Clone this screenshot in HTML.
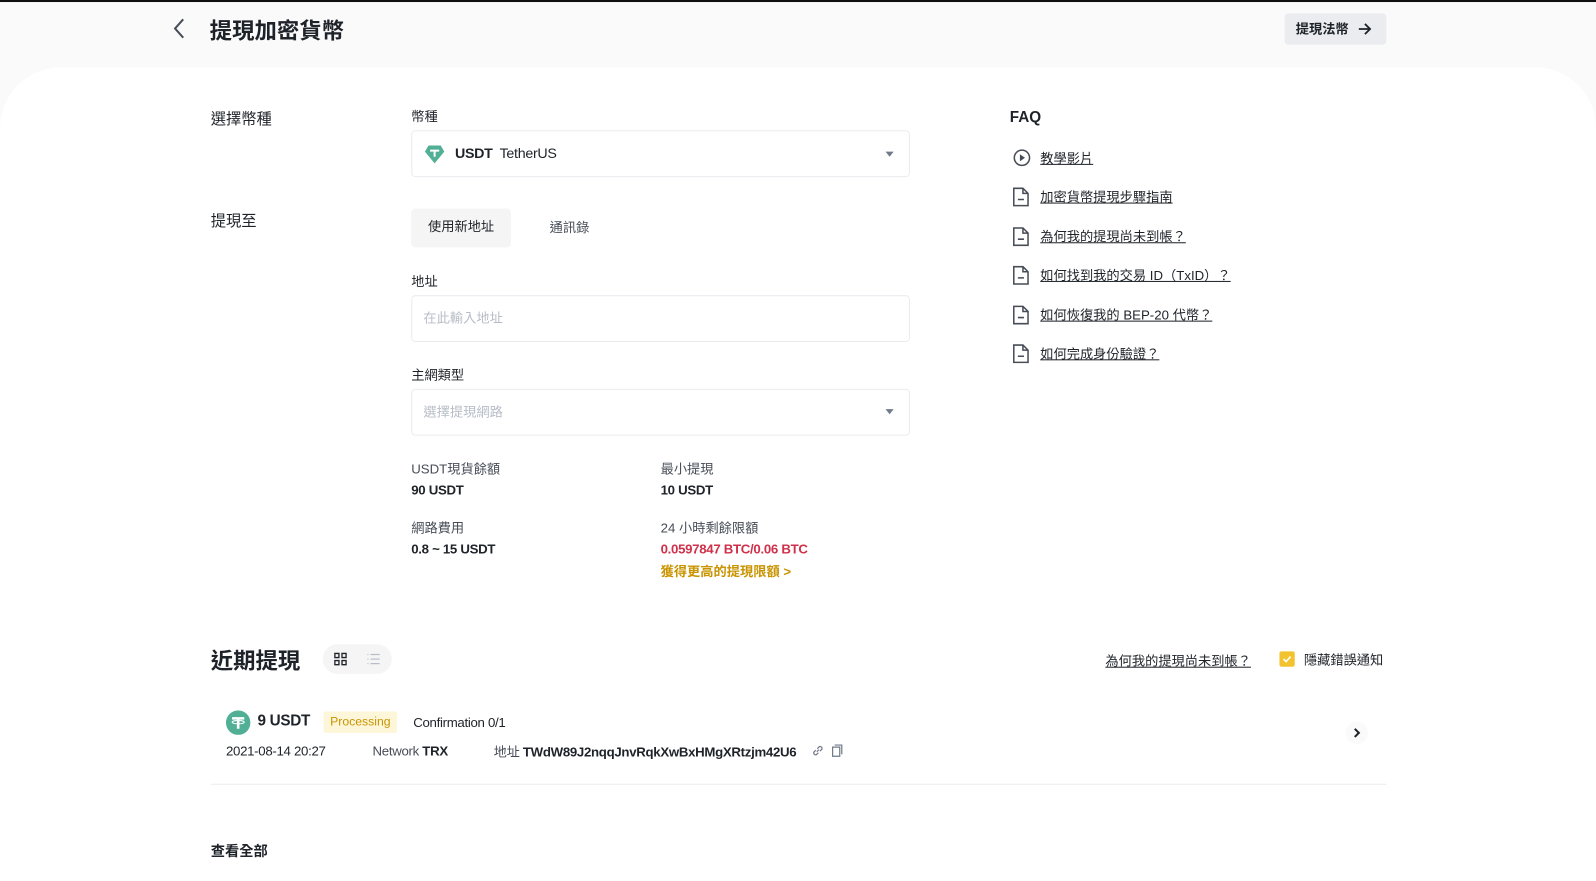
<!DOCTYPE html>
<html><head><meta charset="utf-8"><style>
*{box-sizing:border-box;margin:0;padding:0}
body{width:1596px;height:858px;overflow:hidden;background:#fafafa;font-family:"Liberation Sans","Noto Sans CJK TC",sans-serif;color:#1e2329;position:relative}
#w{position:absolute;left:0;top:0;width:1568px;height:843px;transform:scale(1.01786);transform-origin:0 0}
.abs{position:absolute}
.topline{left:0;top:0;width:1568px;height:2px;background:#111}
.card{left:0;top:66px;width:1568px;height:800px;background:#fff;border-radius:60px 60px 0 0}
.lbl{font-size:15px;color:#1e2329}
.small{font-size:13px;color:#474d57}
.inp{border:1px solid #eaecef;border-radius:4px;background:#fff;width:490px;height:46px}
.ph{font-size:13px;color:#b7bdc6}
.caret{width:0;height:0;border-left:4px solid transparent;border-right:4px solid transparent;border-top:5px solid #707a8a}
.faq a{position:absolute;left:1022px;font-size:13px;color:#1e2329;text-decoration:underline;white-space:nowrap}
.doc{position:absolute;left:995px}
.b{font-weight:bold}
.n{letter-spacing:-0.3px}
</style></head><body><div id="w">
<div class="abs topline"></div>
<svg class="abs" style="left:168px;top:17px" width="16" height="22" viewBox="0 0 16 22"><path d="M12 2 L4 11 L12 20" fill="none" stroke="#474d57" stroke-width="2"/></svg>
<div class="abs b" style="left:206px;top:13px;font-size:22px">提現加密貨幣</div>
<div class="abs b" style="left:1262px;top:13px;width:100px;height:31px;background:#eaecef;border-radius:4px;font-size:13px;line-height:31px;padding-left:11px">提現法幣 <svg style="position:absolute;left:72px;top:9px" width="14" height="13" viewBox="0 0 14 13"><path d="M1 6.5H12M7 1.5L12 6.5L7 11.5" fill="none" stroke="#1e2329" stroke-width="1.8"/></svg></div>
<div class="abs card"></div>

<div class="abs lbl" style="left:207px;top:106px">選擇幣種</div>
<div class="abs small" style="left:404px;top:104px;color:#1e2329">幣種</div>
<div class="abs inp" style="left:404px;top:128px"></div>
<svg class="abs" style="left:417px;top:142px" width="20" height="19" viewBox="0 0 20 19"><path d="M4 1H16L19.5 7L10 18.5L0.5 7Z" fill="#50af95"/><path d="M5.5 5H14.5V7H11V12H9V7H5.5Z" fill="#fff"/></svg>
<div class="abs n" style="left:447px;top:142px;font-size:14px"><b>USDT</b>&nbsp; TetherUS</div>
<div class="abs caret" style="left:870px;top:149px"></div>

<div class="abs lbl" style="left:207px;top:206px">提現至</div>
<div class="abs" style="left:404px;top:205px;width:98px;height:38px;background:#f5f5f5;border-radius:4px;font-size:13px;line-height:36px;text-align:center">使用新地址</div>
<div class="abs" style="left:540px;top:213px;font-size:13px;color:#474d57">通訊錄</div>

<div class="abs small" style="left:404px;top:266px;color:#1e2329">地址</div>
<div class="abs inp" style="left:404px;top:290px"></div>
<div class="abs ph" style="left:416px;top:302px">在此輸入地址</div>
<div class="abs small" style="left:404px;top:358px;color:#1e2329">主網類型</div>
<div class="abs inp" style="left:404px;top:382px"></div>
<div class="abs ph" style="left:416px;top:394px">選擇提現網路</div>
<div class="abs caret" style="left:870px;top:402px"></div>

<div class="abs small" style="left:404px;top:450px">USDT現貨餘額</div>
<div class="abs b n" style="left:404px;top:474px;font-size:13px">90 USDT</div>
<div class="abs small" style="left:404px;top:508px">網路費用</div>
<div class="abs b n" style="left:404px;top:532px;font-size:13px">0.8 ~ 15 USDT</div>
<div class="abs small" style="left:649px;top:450px">最小提現</div>
<div class="abs b n" style="left:649px;top:474px;font-size:13px">10 USDT</div>
<div class="abs small" style="left:649px;top:508px">24 小時剩餘限額</div>
<div class="abs b n" style="left:649px;top:532px;font-size:13px;color:#cf304a">0.0597847 BTC/0.06 BTC</div>
<div class="abs b" style="left:649px;top:551px;font-size:13px;color:#c99400">獲得更高的提現限額 &gt;</div>

<div class="abs b" style="left:992px;top:107px;font-size:15px">FAQ</div>
<div class="faq">
<svg class="doc" style="top:146px" width="18" height="18" viewBox="0 0 18 18"><circle cx="9" cy="9" r="7.5" fill="none" stroke="#474d57" stroke-width="1.5"/><path d="M7 5.5L12 9L7 12.5Z" fill="#474d57"/></svg>
<a style="top:145px">教學影片</a>
<svg class="doc" style="top:184px" width="16" height="19" viewBox="0 0 16 19"><path d="M1 1H10L15 6V18H1Z M10 1V6H15 M5 12H11" fill="none" stroke="#474d57" stroke-width="1.5"/></svg>
<a style="top:183px">加密貨幣提現步驟指南</a>
<svg class="doc" style="top:223px" width="16" height="19" viewBox="0 0 16 19"><path d="M1 1H10L15 6V18H1Z M10 1V6H15 M5 12H11" fill="none" stroke="#474d57" stroke-width="1.5"/></svg>
<a style="top:222px">為何我的提現尚未到帳？</a>
<svg class="doc" style="top:261px" width="16" height="19" viewBox="0 0 16 19"><path d="M1 1H10L15 6V18H1Z M10 1V6H15 M5 12H11" fill="none" stroke="#474d57" stroke-width="1.5"/></svg>
<a style="top:260px">如何找到我的交易 ID（TxID）？</a>
<svg class="doc" style="top:300px" width="16" height="19" viewBox="0 0 16 19"><path d="M1 1H10L15 6V18H1Z M10 1V6H15 M5 12H11" fill="none" stroke="#474d57" stroke-width="1.5"/></svg>
<a style="top:299px">如何恢復我的 BEP-20 代幣？</a>
<svg class="doc" style="top:338px" width="16" height="19" viewBox="0 0 16 19"><path d="M1 1H10L15 6V18H1Z M10 1V6H15 M5 12H11" fill="none" stroke="#474d57" stroke-width="1.5"/></svg>
<a style="top:337px">如何完成身份驗證？</a>
</div>

<div class="abs b" style="left:207px;top:632px;font-size:22px">近期提現</div>
<div class="abs" style="left:317px;top:633px;width:68px;height:29px;background:#f5f5f5;border-radius:15px"></div>
<svg class="abs" style="left:328px;top:641px" width="13" height="13" viewBox="0 0 13 13"><path d="M1 1H5V5H1Z M8 1H12V5H8Z M1 8H5V12H1Z M8 8H12V12H8Z" fill="none" stroke="#1e2329" stroke-width="1.3"/></svg>
<svg class="abs" style="left:360px;top:641px" width="14" height="13" viewBox="0 0 14 13"><path d="M1 2H2M1 6.5H2M1 11H2M4 2H13M4 6.5H13M4 11H13" stroke="#b7bdc6" stroke-width="1.2"/></svg>
<a class="abs" style="left:1086px;top:639px;font-size:13px;color:#1e2329;text-decoration:underline">為何我的提現尚未到帳？</a>
<div class="abs" style="left:1257px;top:640px;width:15px;height:15px;background:#f0b90b;border-radius:2px;opacity:.85"></div>
<svg class="abs" style="left:1259px;top:643px" width="11" height="9" viewBox="0 0 11 9"><path d="M2 4.5L4.5 7L9 2" fill="none" stroke="#fff" stroke-width="1.6"/></svg>
<div class="abs" style="left:1281px;top:638px;font-size:13px">隱藏錯誤通知</div>

<svg class="abs" style="left:222px;top:698px" width="24" height="24" viewBox="0 0 24 24"><circle cx="12" cy="12" r="12" fill="#50af95"/><path d="M6 6.5H18V9H13.3V18H10.7V9H6Z" fill="#fff"/><ellipse cx="12" cy="11.5" rx="6" ry="1.6" fill="none" stroke="#fff" stroke-width="1"/></svg>
<div class="abs b n" style="left:253px;top:700px;font-size:15px">9 USDT</div>
<div class="abs" style="left:318px;top:699px;width:72px;height:21px;background:#fdf6d8;border-radius:2px;font-size:12px;line-height:21px;text-align:center;color:#c99400">Processing</div>
<div class="abs n" style="left:406px;top:702px;font-size:13px">Confirmation 0/1</div>
<div class="abs n" style="left:222px;top:730px;font-size:13px">2021-08-14 20:27</div>
<div class="abs n" style="left:366px;top:730px;font-size:13px;color:#474d57">Network <b style="color:#1e2329">TRX</b></div>
<div class="abs n" style="left:485px;top:728px;font-size:13px;color:#474d57">地址 <b style="color:#1e2329">TWdW89J2nqqJnvRqkXwBxHMgXRtzjm42U6</b></div>
<svg class="abs" style="left:797px;top:731px" width="13" height="13" viewBox="0 0 13 13"><path d="M5.5 7.5L7.5 5.5M4.5 6L2.5 8A2 2 0 0 0 5 10.5L7 8.5M6 4.5L8 2.5A2 2 0 0 1 10.5 5L8.5 7" fill="none" stroke="#707a8a" stroke-width="1.2"/></svg>
<svg class="abs" style="left:817px;top:731px" width="11" height="13" viewBox="0 0 11 13"><path d="M3 1H10V10 M1 3H8V12H1Z" fill="none" stroke="#707a8a" stroke-width="1.2"/></svg>
<div class="abs" style="left:1322px;top:709px;width:22px;height:22px;border-radius:11px;background:#fafafa"></div>
<svg class="abs" style="left:1329px;top:715px" width="8" height="10" viewBox="0 0 8 10"><path d="M2 1L6 5L2 9" fill="none" stroke="#1e2329" stroke-width="2"/></svg>
<div class="abs" style="left:207px;top:770px;width:1155px;height:1px;background:#eaecef"></div>
<div class="abs b" style="left:207px;top:826px;font-size:14px">查看全部</div>
</div></body></html>
